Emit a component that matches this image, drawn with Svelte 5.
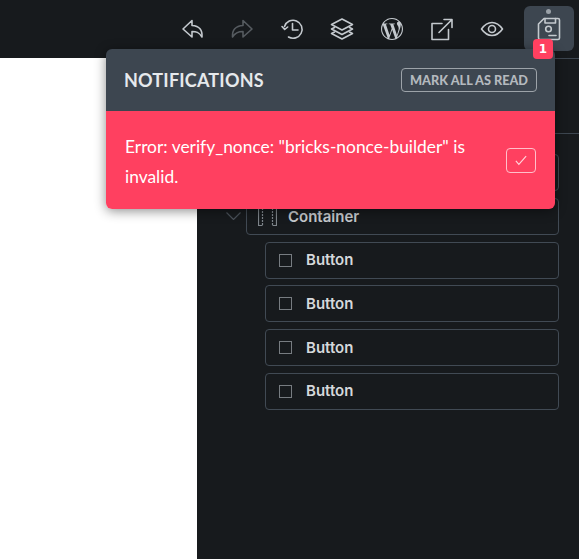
<script lang="ts">
  const buttons = ["Button", "Button", "Button", "Button"];
</script>

<div class="builder">
  <header class="toolbar">
    <span class="tool">
      <svg viewBox="0 0 24 24"><path d="M12 3.500 3 12l9 8v-5.500c4 0 7 .5 10 5.500.5-7-2.500-11-10-11.500z" /></svg>
    </span>
    <span class="tool disabled">
      <svg viewBox="0 0 24 24"><path d="m13 3.500 9 8.500-9 8v-5.500c-4 0-7.500.5-10.500 5.500-.5-7 3-11 10.500-11.500z" /></svg>
    </span>
    <span class="tool">
      <svg viewBox="0 0 24 24"><path d="M8.500 20A9 9 0 1 0 4.500 9.500" /><path d="m2 9.500 2.700 3 3-2.500" /><path d="M12.500 6.500V13h5.500" /></svg>
    </span>
    <span class="tool">
      <svg viewBox="0 0 24 24"><path d="M12 2l10.500 5.500L12 13 1.500 7.500z" /><path d="M4.500 10.500 1.500 12 12 17.500 22.500 12l-3-1.500" /><path d="M4.500 15 1.500 16.500 12 22l10.500-5.500-3-1.500" /></svg>
    </span>
    <span class="tool">
      <svg class="logo" viewBox="0 0 24 24"><path d="M21.469 6.825c.84 1.537 1.318 3.3 1.318 5.175 0 3.979-2.156 7.456-5.363 9.325l3.295-9.527c.615-1.54.82-2.771.82-3.864 0-.405-.026-.78-.07-1.11m-7.981.105c.647-.03 1.232-.105 1.232-.105.582-.075.514-.93-.067-.899 0 0-1.755.135-2.88.135-1.064 0-2.85-.15-2.85-.15-.585-.03-.661.855-.075.885 0 0 .54.061 1.125.09l1.68 4.605-2.37 7.08L5.354 6.9c.649-.03 1.234-.1 1.234-.1.585-.075.516-.93-.065-.896 0 0-1.746.138-2.874.138-.2 0-.438-.008-.69-.015C4.911 3.15 8.235 1.215 12 1.215c2.809 0 5.365 1.072 7.286 2.833-.046-.003-.091-.009-.141-.009-1.06 0-1.812.923-1.812 1.914 0 .89.513 1.643 1.06 2.531.411.72.89 1.643.89 2.977 0 .915-.354 1.994-.821 3.479l-1.075 3.585-3.9-11.61.001.014zM12 22.784c-1.059 0-2.081-.153-3.048-.437l3.237-9.406 3.315 9.087c.024.053.05.101.078.149-1.12.393-2.325.609-3.582.609M1.211 12c0-1.564.336-3.05.935-4.39L7.29 21.709C3.694 19.96 1.212 16.271 1.211 12M12 0C5.385 0 0 5.385 0 12s5.385 12 12 12 12-5.385 12-12S18.615 0 12 0" /></svg>
    </span>
    <span class="tool">
      <svg viewBox="0 0 24 24"><path d="M12 6.500H2v16h16.500V12.500" /><path d="M9 15.500 22 2.500M14 2.500h8v8" /></svg>
    </span>
    <span class="tool">
      <svg viewBox="0 0 24 24"><path d="M1.500 12C5 7 8.500 5.500 12 5.500S19 7 22.500 12C19 17 15.500 18.500 12 18.500S5 17 1.500 12z" /><circle cx="12" cy="12" r="3.500" /></svg>
    </span>
    <span class="tool save">
      <i class="dot"></i>
      <svg viewBox="0 0 24 24"><path d="M7 1.500h14A1.500 1.500 0 0 1 22.500 3v18a1.500 1.500 0 0 1-1.500 1.500H3A1.500 1.500 0 0 1 1.500 21V7z" /><path d="M8 1.500v4.500h10.500V1.500" /><circle cx="11.500" cy="12" r="2.800" /><path d="M12 18.500h7" /></svg>
      <b class="badge">1</b>
    </span>
  </header>

  <main class="workspace">
    <div class="canvas"></div>
    <aside class="panel">
      <div class="panel-head"></div>
      <ul class="tree">
        <li class="row section"></li>
        <li class="parent">
          <svg class="chevron" viewBox="0 0 15 8"><path d="m.5.5 7 7 7-7" /></svg>
          <div class="row">
            <svg class="container-icon" viewBox="0 0 19 18"><path d="M.5 0v18M18.500 0v18" /><path class="dashed" d="M4.500 0v18M14.500 0v18" /><path d="M.5 17.500h4M14.500 17.500h4M.5.5h4M14.500.5h4" /></svg>
            <span>Container</span>
          </div>
        </li>
        {#each buttons as label}
          <li class="row child">
            <i class="square"></i>
            <span>{label}</span>
          </li>
        {/each}
      </ul>
    </aside>
  </main>

  <section class="notifications">
    <div class="notifications-head">
      <h2>NOTIFICATIONS</h2>
      <button type="button" class="mark-read">MARK ALL AS READ</button>
    </div>
    <div class="notification">
      <p>Error: verify_nonce: "bricks-nonce-builder" is invalid.</p>
      <button type="button" class="dismiss" aria-label="Mark as read">
        <svg viewBox="0 0 14 12"><path d="m1 6.500 3.500 4L13 1" /></svg>
      </button>
    </div>
  </section>
</div>

<style>
  :global(body) {
    background: #171a1d;
  }

  .builder {
    position: relative;
    display: grid;
    grid-template-rows: 58px 501px;
    width: 579px;
    height: 559px;
    overflow: hidden;
    background: #171a1d;
  }

  .toolbar {
    display: flex;
    justify-content: flex-end;
    align-items: flex-start;
    padding: 6px 5px 0 0;
  }

  .tool {
    display: flex;
    align-items: center;
    justify-content: center;
    position: relative;
    width: 50px;
    height: 45px;
    color: #c4c9ce;
  }

  .tool svg {
    width: 24px;
    height: 24px;
    fill: none;
    stroke: currentColor;
    stroke-width: 1.6;
    stroke-linejoin: round;
    stroke-linecap: round;
  }

  .tool svg.logo {
    width: 22px;
    height: 22px;
    fill: currentColor;
    stroke: none;
  }

  .tool.disabled {
    color: #565b60;
  }

  .tool.save {
    margin-left: 7px;
    border-radius: 6px;
    background: #3d4650;
  }

  .dot {
    position: absolute;
    top: 3px;
    left: 22px;
    width: 5px;
    height: 5px;
    border-radius: 50%;
    background: #9aa1a8;
  }

  .badge {
    position: absolute;
    left: 9px;
    top: 33px;
    width: 20px;
    height: 20px;
    border-radius: 4px;
    color: #fff;
    background: #ff4060;
    font: 700 12px/20px "DejaVu Sans", sans-serif;
    text-align: center;
    z-index: 3;
  }

  .workspace {
    display: grid;
    grid-template-columns: 197px 382px;
  }

  .canvas {
    background: #fff;
  }

  .panel {
    border-top: 1px solid #3d4650;
    background: #171a1d;
  }

  .panel-head {
    height: 74px;
    border-bottom: 1px solid #3d4650;
  }

  .tree {
    display: flex;
    flex-direction: column;
    align-items: flex-end;
    gap: 6.75px;
    margin: 20px 20px 0 0;
    padding: 0;
    list-style: none;
    font: 600 15px/20px Inter, sans-serif;
    color: #d5d8db;
  }

  .row {
    display: flex;
    align-items: center;
    box-sizing: border-box;
    height: 37px;
    border: 1px solid #414a54;
    border-radius: 4px;
  }

  .section {
    width: 313px;
  }

  .parent {
    display: flex;
    align-items: center;
    gap: 5px;
    color: #c5c8cc;
  }

  .parent .row {
    width: 313px;
    gap: 11px;
    padding: 2px 0 0 11px;
  }

  .chevron {
    width: 15px;
    height: 8px;
    fill: none;
    stroke: #4a5159;
    stroke-width: 1.2;
  }

  .container-icon {
    width: 19px;
    height: 18px;
    fill: none;
    stroke: #7f858b;
    stroke-width: 1.2;
  }

  .container-icon .dashed {
    stroke-dasharray: 2 1;
  }

  .child {
    width: 294px;
    gap: 14px;
    padding-left: 13px;
  }

  .square {
    box-sizing: border-box;
    width: 13px;
    height: 13px;
    border: 1.5px solid #777c81;
  }

  .notifications {
    position: absolute;
    left: 106px;
    top: 49px;
    z-index: 2;
    width: 449px;
    border-radius: 6px;
    overflow: hidden;
    box-shadow: 0 2px 12px rgb(0 0 0 / 45%);
  }

  .notifications-head {
    display: flex;
    align-items: center;
    justify-content: space-between;
    height: 62px;
    padding: 0 18px;
    background: #3d4650;
  }

  h2 {
    margin: 0;
    color: #e6e9ec;
    font: 700 18px/1 Lato, sans-serif;
    letter-spacing: .2px;
  }

  .mark-read {
    height: 24px;
    padding: 0 8px;
    border: 1px solid #9da3a9;
    border-radius: 4px;
    color: #b4b9be;
    background: transparent;
    font: 900 12.7px/1 Lato, sans-serif;
  }

  .notification {
    display: flex;
    align-items: center;
    justify-content: space-between;
    height: 98px;
    padding: 0 19px;
    color: #fff;
    background: #ff4060;
  }

  .notification p {
    width: 370px;
    margin: 0;
    padding-top: 4px;
    font: 400 17.4px/30px Lato, sans-serif;
  }

  .dismiss {
    display: flex;
    align-items: center;
    justify-content: center;
    width: 30px;
    height: 25px;
    padding: 0;
    border: 1px solid #ffc0cb;
    border-radius: 4px;
    background: transparent;
  }

  .dismiss svg {
    width: 12px;
    height: 11px;
    fill: none;
    stroke: #ffd5dc;
    stroke-width: 1.3;
  }
</style>
